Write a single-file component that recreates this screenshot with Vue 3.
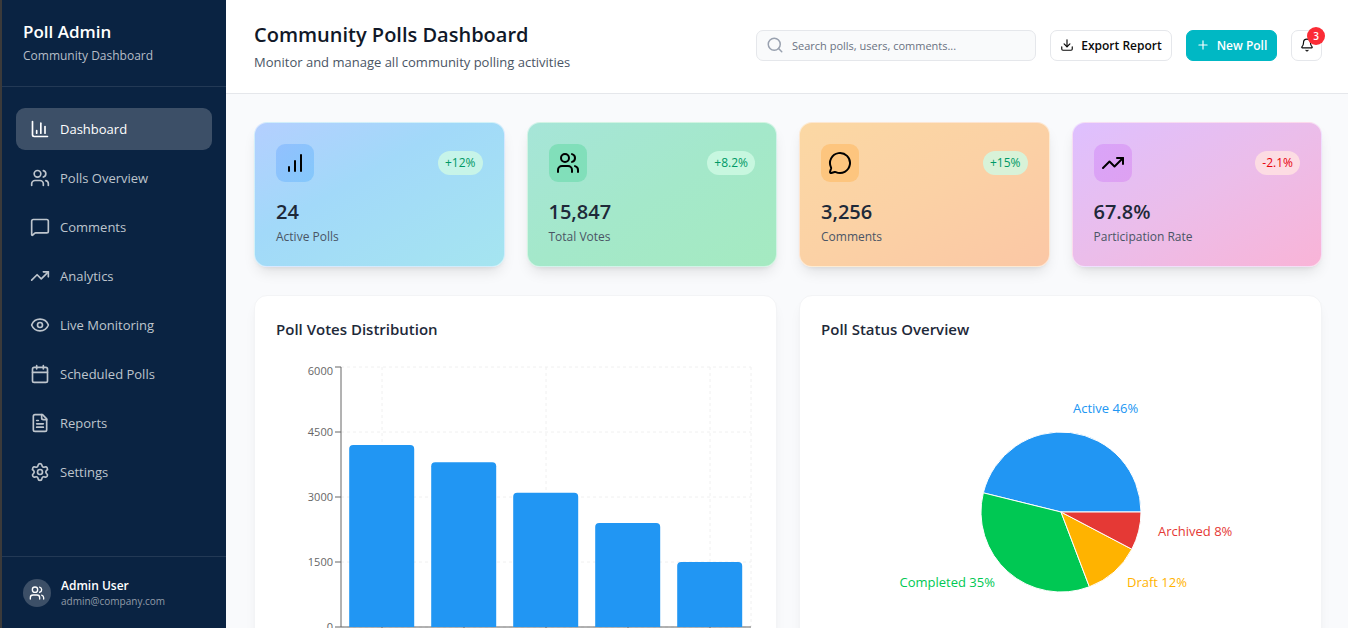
<script setup>
const icons = {
  columns: ['M3 3v16a2 2 0 0 0 2 2h16', 'M18 17V9', 'M13 17V5', 'M8 17v-3'],
  bars: ['M12 20V10', 'M18 20V4', 'M6 20v-4'],
  users: [
    'M16 21v-2a4 4 0 0 0-4-4H6a4 4 0 0 0-4 4v2',
    'M9 3a4 4 0 1 0 0 8a4 4 0 1 0 0-8',
    'M22 21v-2a4 4 0 0 0-3-3.87',
    'M16 3.13a4 4 0 0 1 0 7.75',
  ],
  message: [
    'M22 17a2 2 0 0 1-2 2H6.828a2 2 0 0 0-1.414.586l-2.202 2.202A.71.71 0 0 1 2 21.286V5a2 2 0 0 1 2-2h16a2 2 0 0 1 2 2z',
  ],
  bubble: [
    'M2.992 16.342a2 2 0 0 1 .094 1.167l-1.065 3.29a1 1 0 0 0 1.236 1.168l3.413-.998a2 2 0 0 1 1.099.092 10 10 0 1 0-4.777-4.719',
  ],
  trend: ['M22 7l-8.5 8.5-5-5L2 17', 'M16 7h6v6'],
  eye: [
    'M2.062 12.348a1 1 0 0 1 0-.696 10.75 10.75 0 0 1 19.876 0 1 1 0 0 1 0 .696 10.75 10.75 0 0 1-19.876 0',
    'M12 9a3 3 0 1 0 0 6a3 3 0 1 0 0-6',
  ],
  calendar: ['M8 2v4', 'M16 2v4', 'M5 4h14a2 2 0 0 1 2 2v14a2 2 0 0 1-2 2H5a2 2 0 0 1-2-2V6a2 2 0 0 1 2-2z', 'M3 10h18'],
  file: [
    'M15 2H6a2 2 0 0 0-2 2v16a2 2 0 0 0 2 2h12a2 2 0 0 0 2-2V7Z',
    'M14 2v4a2 2 0 0 0 2 2h4',
    'M10 9H8',
    'M16 13H8',
    'M16 17H8',
  ],
  settings: [
    'M9.671 4.136a2.34 2.34 0 0 1 4.659 0 2.34 2.34 0 0 0 3.319 1.915 2.34 2.34 0 0 1 2.33 4.033 2.34 2.34 0 0 0 0 3.831 2.34 2.34 0 0 1-2.33 4.033 2.34 2.34 0 0 0-3.319 1.915 2.34 2.34 0 0 1-4.659 0 2.34 2.34 0 0 0-3.32-1.915 2.34 2.34 0 0 1-2.33-4.033 2.34 2.34 0 0 0 0-3.831A2.34 2.34 0 0 1 6.35 6.051a2.34 2.34 0 0 0 3.319-1.915',
    'M12 9a3 3 0 1 0 0 6a3 3 0 1 0 0-6',
  ],
}

const nav = [
  { label: 'Dashboard', icon: 'columns', active: true },
  { label: 'Polls Overview', icon: 'users' },
  { label: 'Comments', icon: 'message' },
  { label: 'Analytics', icon: 'trend' },
  { label: 'Live Monitoring', icon: 'eye' },
  { label: 'Scheduled Polls', icon: 'calendar' },
  { label: 'Reports', icon: 'file' },
  { label: 'Settings', icon: 'settings' },
]

const stats = [
  { tone: 'blue', icon: 'bars', value: '24', label: 'Active Polls', change: '+12%' },
  { tone: 'green', icon: 'users', value: '15,847', label: 'Total Votes', change: '+8.2%' },
  { tone: 'orange', icon: 'bubble', value: '3,256', label: 'Comments', change: '+15%' },
  { tone: 'purple', icon: 'trend', value: '67.8%', label: 'Participation Rate', change: '-2.1%', down: true },
]

// Bar chart geometry
const plot = { left: 65, right: 475, top: 5, bottom: 265, max: 6000 }
const votes = [4200, 3800, 3100, 2400, 1500]
const band = (plot.right - plot.left) / votes.length
const barWidth = 65
const yOf = (v) => plot.bottom - (v / plot.max) * (plot.bottom - plot.top)
const ticks = [0, 1500, 3000, 4500, 6000].map((v) => ({ v, y: yOf(v) }))
const centers = votes.map((_, i) => plot.left + band * (i + 0.5))
const gridX = [centers[0], centers[2], centers[4], plot.right]
const bars = votes.map((v, i) => {
  const x = plot.left + band * i + band / 10
  const y = yOf(v)
  const r = 4
  return `M${x} ${plot.bottom}V${y + r}a${r} ${r} 0 0 1 ${r} ${-r}h${barWidth - 2 * r}a${r} ${r} 0 0 1 ${r} ${r}V${plot.bottom}Z`
})

// Pie geometry, counter-clockwise from three o'clock
const pie = { cx: 240, cy: 150, r: 80 }
const status = [
  { name: 'Active', pct: 46, count: 24, color: '#2196f3', x: 252, y: 51, anchor: 'start' },
  { name: 'Completed', pct: 35, count: 18, color: '#00c853', x: 174, y: 225, anchor: 'end' },
  { name: 'Draft', pct: 12, count: 6, color: '#ffb300', x: 306, y: 225, anchor: 'start' },
  { name: 'Archived', pct: 8, count: 4, color: '#e53935', x: 337, y: 174, anchor: 'start' },
]
const total = status.reduce((sum, s) => sum + s.count, 0)
const point = (a) => `${pie.cx + pie.r * Math.cos(a)} ${pie.cy - pie.r * Math.sin(a)}`
let angle = 0
const slices = status.map((s) => {
  const start = angle
  angle += (s.count / total) * Math.PI * 2
  return { ...s, d: `M${pie.cx} ${pie.cy}L${point(start)}A${pie.r} ${pie.r} 0 0 0 ${point(angle)}Z` }
})
</script>

<template>
  <div class="app">
    <aside class="sidebar">
      <div class="brand">
        <h2>Poll Admin</h2>
        <p>Community Dashboard</p>
      </div>
      <nav class="nav" aria-label="Main">
        <a v-for="n in nav" :key="n.label" href="#" :class="{ active: n.active }">
          <svg class="icon nav-icon" viewBox="0 0 24 24" aria-hidden="true">
            <path v-for="d in icons[n.icon]" :key="d" :d="d" />
          </svg>
          <span>{{ n.label }}</span>
        </a>
      </nav>
      <div class="account">
        <span class="avatar">
          <svg class="icon" viewBox="0 0 24 24" aria-hidden="true">
            <path v-for="d in icons.users" :key="d" :d="d" />
          </svg>
        </span>
        <div>
          <p class="name">Admin User</p>
          <p class="mail">admin@company.com</p>
        </div>
      </div>
    </aside>

    <div class="page">
      <header class="topbar">
        <div class="titles">
          <h1>Community Polls Dashboard</h1>
          <p>Monitor and manage all community polling activities</p>
        </div>
        <div class="actions">
          <label class="search">
            <svg class="icon" viewBox="0 0 24 24" aria-hidden="true">
              <circle cx="11" cy="11" r="8" />
              <path d="m21 21-4.3-4.3" />
            </svg>
            <input type="search" aria-label="Search" placeholder="Search polls, users, comments..." />
          </label>
          <button type="button" class="btn export">
            <svg class="icon" viewBox="0 0 24 24" aria-hidden="true">
              <path d="M21 15v4a2 2 0 0 1-2 2H5a2 2 0 0 1-2-2v-4" />
              <path d="m7 10 5 5 5-5" />
              <path d="M12 15V3" />
            </svg>
            Export Report
          </button>
          <button type="button" class="btn primary">
            <svg class="icon" viewBox="0 0 24 24" aria-hidden="true">
              <path d="M5 12h14" />
              <path d="M12 5v14" />
            </svg>
            New Poll
          </button>
          <button type="button" class="btn bell" aria-label="Notifications">
            <svg class="icon" viewBox="0 0 24 24" aria-hidden="true">
              <path d="M10.268 21a2 2 0 0 0 3.464 0" />
              <path d="M3.262 15.326A1 1 0 0 0 4 17h16a1 1 0 0 0 .74-1.673C19.41 13.956 18 12.499 18 8A6 6 0 0 0 6 8c0 4.499-1.411 5.956-2.738 7.326" />
            </svg>
            <span class="count">3</span>
          </button>
        </div>
      </header>

      <main class="content">
        <section class="stats">
          <article v-for="s in stats" :key="s.label" class="stat" :class="s.tone">
            <div class="stat-top">
              <span class="stat-icon">
                <svg class="icon" viewBox="0 0 24 24" aria-hidden="true">
                  <path v-for="d in icons[s.icon]" :key="d" :d="d" />
                </svg>
              </span>
              <span class="change" :class="{ down: s.down }">{{ s.change }}</span>
            </div>
            <p class="value">{{ s.value }}</p>
            <p class="label">{{ s.label }}</p>
          </article>
        </section>

        <section class="charts">
          <article class="panel">
            <h3>Poll Votes Distribution</h3>
            <svg class="chart" viewBox="0 0 479 300" role="img" aria-label="Poll votes distribution">
              <g class="grid">
                <line v-for="t in ticks" :key="t.v" :x1="plot.left" :x2="plot.right" :y1="t.y" :y2="t.y" />
                <line v-for="x in gridX" :key="x" :x1="x" :x2="x" :y1="plot.top" :y2="plot.bottom" />
              </g>
              <g class="axis">
                <line :x1="plot.left" :x2="plot.left" :y1="plot.top" :y2="plot.bottom" />
                <line :x1="plot.left" :x2="plot.right" :y1="plot.bottom" :y2="plot.bottom" />
                <line v-for="t in ticks" :key="t.v" :x1="plot.left - 6" :x2="plot.left" :y1="t.y" :y2="t.y" />
                <line v-for="x in centers" :key="x" :x1="x" :x2="x" :y1="plot.bottom" :y2="plot.bottom + 6" />
              </g>
              <text v-for="t in ticks" :key="t.v" class="tick" :x="plot.left - 8" :y="Math.max(t.y + 4, 13)">{{ t.v }}</text>
              <path v-for="d in bars" :key="d" class="bar" :d="d" />
            </svg>
          </article>
          <article class="panel">
            <h3>Poll Status Overview</h3>
            <svg class="chart" viewBox="0 0 479 300" role="img" aria-label="Poll status overview">
              <path v-for="s in slices" :key="s.name" class="slice" :d="s.d" :fill="s.color" />
              <text v-for="s in slices" :key="s.name" class="pie-label" :x="s.x" :y="s.y" :text-anchor="s.anchor" :fill="s.color">{{ s.name }} {{ s.pct }}%</text>
            </svg>
          </article>
        </section>
      </main>
    </div>
  </div>
</template>

<style>
body {
  margin: 0;
}
</style>

<style scoped>
* {
  box-sizing: border-box;
}
h1, h2, h3, p {
  margin: 0;
}
.app {
  display: flex;
  height: 100vh;
  overflow: hidden;
  border-left: 2px solid #3b3a3a;
  background: #f9fafc;
  color: #1e2939;
  font-family: "Open Sans", "Noto Sans", sans-serif;
  font-size: 13px;
}
.icon {
  display: block;
  flex: none;
  width: 14px;
  height: 14px;
  fill: none;
  stroke: currentColor;
  stroke-width: 2;
  stroke-linecap: round;
  stroke-linejoin: round;
}

.sidebar {
  display: flex;
  flex: none;
  flex-direction: column;
  width: 224px;
  background: #0a2342;
  color: #fff;
}
.brand {
  padding: 20px 21px 18px;
  border-bottom: 1px solid #233955;
}
.brand h2 {
  font-size: 17px;
  font-weight: 600;
  line-height: 24px;
}
.brand p {
  color: #b6bdc7;
  font-size: 12px;
  line-height: 24px;
}
.nav {
  display: flex;
  flex: 1;
  flex-direction: column;
  gap: 7px;
  padding: 21px 14px;
}
.nav a {
  display: flex;
  align-items: center;
  gap: 10px;
  height: 42px;
  padding: 0 14px;
  border-radius: 9px;
  color: #bec5cd;
  text-decoration: none;
}
.nav a.active {
  background: #3c4f67;
  color: #fff;
}
.nav-icon {
  width: 20px;
  height: 20px;
}
.account {
  display: flex;
  align-items: center;
  gap: 10px;
  padding: 21px;
  height: 72px;
  border-top: 1px solid #233955;
}
.avatar {
  display: grid;
  place-items: center;
  width: 28px;
  height: 28px;
  border-radius: 50%;
  background: #3c4f67;
}
.avatar .icon {
  width: 16px;
  height: 16px;
}
.name {
  font-size: 12px;
  font-weight: 600;
  line-height: 16px;
}
.mail {
  color: #919ba8;
  font-size: 10px;
  line-height: 14px;
}

.page {
  display: flex;
  flex: 1;
  flex-direction: column;
  min-width: 0;
}
.topbar {
  display: flex;
  flex: none;
  align-items: center;
  justify-content: space-between;
  height: 94px;
  padding: 0 26px 3px 28px;
  border-bottom: 1px solid #e5e7eb;
  background: #fff;
}
.titles {
  padding-top: 6px;
}
.titles h1 {
  color: #101828;
  font-size: 20px;
  font-weight: 600;
  line-height: 28px;
}
.titles p {
  color: #4a5565;
  font-size: 13px;
  line-height: 26px;
}
.actions {
  display: flex;
  align-items: center;
  gap: 14px;
}
.search {
  display: flex;
  align-items: center;
  gap: 8px;
  width: 280px;
  height: 31px;
  padding: 0 9px;
  border: 1px solid #e5e7eb;
  border-radius: 7px;
  background: #f9fafb;
}
.search .icon {
  width: 18px;
  height: 18px;
  color: #99a1af;
}
.search input {
  flex: 1;
  min-width: 0;
  padding: 0;
  border: 0;
  outline: 0;
  background: transparent;
  font: inherit;
  font-size: 11px;
}
.search input::placeholder {
  color: #6a7282;
  opacity: 1;
}
.btn {
  position: relative;
  display: flex;
  align-items: center;
  justify-content: center;
  gap: 7px;
  height: 31px;
  padding: 0 8px;
  border: 1px solid #e5e7eb;
  border-radius: 7px;
  background: #fff;
  color: #0a0a0a;
  font: inherit;
  font-size: 12px;
  font-weight: 600;
  white-space: nowrap;
}
.export {
  min-width: 122px;
}
.primary {
  min-width: 91px;
  border-color: #00b8c4;
  background: #00b8c4;
  color: #fff;
}
.bell {
  width: 31px;
  padding: 0;
}
.count {
  position: absolute;
  top: -4px;
  right: -4px;
  width: 18px;
  height: 18px;
  border-radius: 50%;
  background: #fb2c36;
  color: #fff;
  font-size: 10px;
  line-height: 18px;
  text-align: center;
}

.content {
  display: flex;
  flex-direction: column;
  gap: 28px;
  padding: 28px 26px 28px 28px;
}
.stats {
  display: grid;
  grid-template-columns: repeat(4, 1fr);
  gap: 22px;
}
.stat {
  padding: 21px 21px 20px;
  border: 1px solid rgba(255, 255, 255, 0.5);
  border-radius: 13px;
  box-shadow: 0 8px 14px -3px rgba(0, 0, 0, 0.1), 0 3px 5px -3px rgba(0, 0, 0, 0.1);
}
.blue {
  background: linear-gradient(to bottom right, #b4cfff, #a2d9f9 40%, #a5e5f0);
}
.green {
  background: linear-gradient(to bottom right, #a6e5d8, #a4e8ca 50%, #a5eac1);
}
.orange {
  background: linear-gradient(to bottom right, #fbd8a4, #fbd1a5 50%, #fbc7a5);
}
.purple {
  background: linear-gradient(to bottom right, #dec0ff, #ebbdea 50%, #f9b4d7);
}
.stat-top {
  display: flex;
  align-items: center;
  justify-content: space-between;
}
.stat-icon {
  display: grid;
  place-items: center;
  width: 38px;
  height: 38px;
  border-radius: 9px;
  color: #000;
}
.stat-icon .icon {
  width: 24px;
  height: 24px;
}
.blue .stat-icon {
  background: linear-gradient(to bottom right, #92c0fe, #84c8fb);
}
.green .stat-icon {
  background: #81dfba;
}
.orange .stat-icon {
  background: #fdc57e;
}
.purple .stat-icon {
  background: linear-gradient(to bottom right, #d9a4f9, #dea1f1);
}
.change {
  padding: 0 7px;
  border-radius: 12px;
  background: rgba(208, 250, 229, 0.8);
  color: #009966;
  font-size: 12px;
  line-height: 24px;
}
.change.down {
  background: rgba(255, 226, 226, 0.85);
  color: #e7000b;
}
.value {
  margin-top: 14px;
  font-size: 20px;
  font-weight: 600;
  line-height: 31px;
}
.label {
  color: #4a5565;
  font-size: 12px;
  line-height: 19px;
}

.charts {
  display: grid;
  grid-template-columns: repeat(2, 1fr);
  gap: 22px;
}
.panel {
  padding: 21px;
  border: 1px solid #f3f4f6;
  border-radius: 13px;
  background: #fff;
  box-shadow: 0 8px 14px -3px rgba(0, 0, 0, 0.06), 0 3px 5px -3px rgba(0, 0, 0, 0.06);
}
.panel h3 {
  margin-bottom: 21px;
  font-size: 15px;
  font-weight: 600;
  line-height: 24px;
}
.chart {
  display: block;
  width: 100%;
  overflow: visible;
}
.grid line {
  stroke: #f0f0f0;
  stroke-dasharray: 3 3;
}
.axis line {
  stroke: #666;
}
.tick {
  fill: #666;
  font-size: 11px;
  text-anchor: end;
}
.bar {
  fill: #2196f3;
}
.slice {
  stroke: #fff;
}
.pie-label {
  font-size: 13px;
}
</style>
